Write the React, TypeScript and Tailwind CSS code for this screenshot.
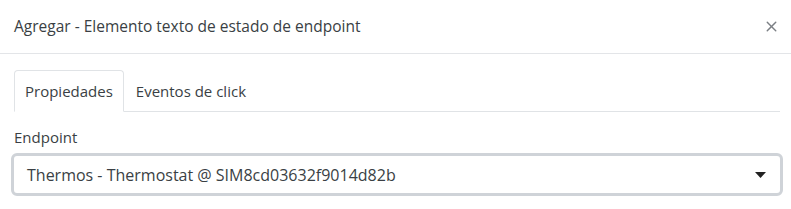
import { X } from "lucide-react";

export default function App() {
  return (
    <div className="h-[209px] w-[791px] overflow-hidden bg-white font-['Open_Sans',sans-serif] text-[#3a3f44]">
      <header className="flex h-[54px] items-center justify-between border-b border-[#e3e5e8] pl-[14px] pr-[11px]">
        <h1 className="text-[15.5px] leading-none">Agregar - Elemento texto de estado de endpoint</h1>
        <X className="h-[17px] w-[17px] text-[#7b7f84]" strokeWidth={2} />
      </header>
      <div className="pl-[14px] pr-[11px] pt-[16px]">
        <nav className="flex border-b border-[#e0e3e6]">
          <button className="-mb-px h-[42px] rounded-t-[4px] border border-[#e0e3e6] border-b-white bg-white px-[10px] text-[15px]" type="button">
            Propiedades
          </button>
          <button className="-mb-px h-[42px] border border-transparent px-[11px] text-[15px]" type="button">
            Eventos de click
          </button>
        </nav>
      </div>
      <div className="pl-[11px] pr-[8px] pt-[18px]">
        <label className="block pl-[3px] text-[15px] leading-none">Endpoint</label>
        <div className="mt-[8px] flex h-[43px] items-center justify-between rounded-[6px] border-[3px] border-[#cfd3d8] bg-white pl-[13px] pr-[14px]">
          <span className="text-[16px]">Thermos - Thermostat @ SIM8cd03632f9014d82b</span>
          <svg className="h-[6px] w-[11px]" viewBox="0 0 11 6">
            <path d="M0 0h11L5.5 6z" fill="#222" />
          </svg>
        </div>
      </div>
    </div>
  );
}
